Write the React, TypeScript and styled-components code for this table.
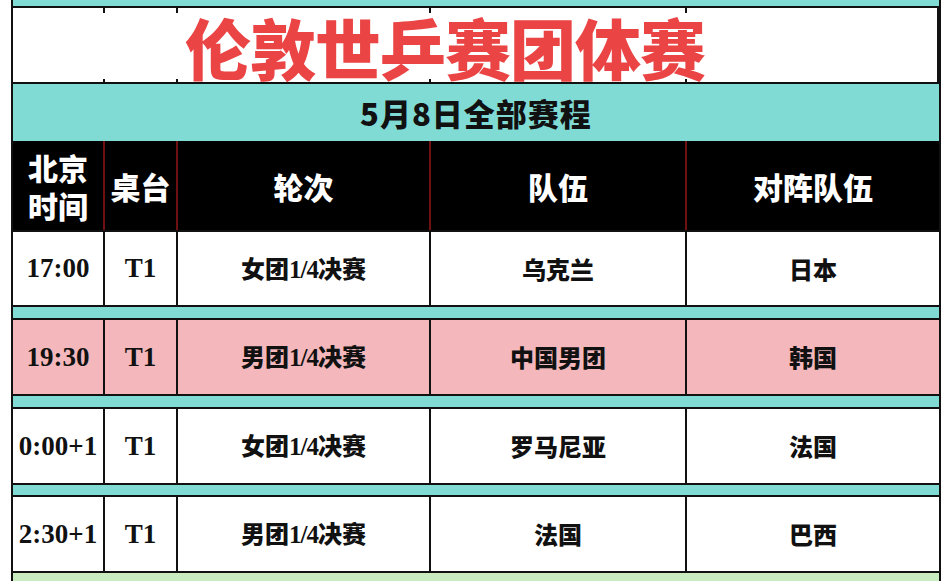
import {FC} from 'react'
import styled, {createGlobalStyle} from 'styled-components'

// 伦敦世乒赛团体赛 schedule board, 5月8日

const TEAL = '#80dbd5'
const PINK = '#f4b8bc'
const COLS = '92px 73px 253px 256px 252px'

const GlobalStyle = createGlobalStyle`
  html, body {
    margin: 0;
    padding: 0;
    background: #fff;
  }
  body {
    font-family: "Noto Sans CJK SC", "Noto Sans", sans-serif;
  }
`

const Page = styled.div`
  width: 945px;
  height: 581px;
  overflow: hidden;
  background: #fff;
`

const Sheet = styled.div`
  margin-left: 11px;
  width: 926px;
  border-left: 2px solid #111;
  border-right: 2px solid #111;
  background: #c8ebc0;
  height: 581px;
`

const TopStrip = styled.div`
  height: 6px;
  background: ${TEAL};
  border-bottom: 2px solid #111;
`

const TitleRow = styled.div`
  position: relative;
  display: grid;
  grid-template-columns: ${COLS};
  height: 74px;
  background: #fff;
  border-bottom: 2px solid #111;
`

const TickCell = styled.div`
  border-right: 2px solid #111;
  &:last-child {
    border-right: none;
  }
`

const TitleCover = styled.div`
  position: absolute;
  inset: 5px 4px 3px 4px;
  background: #fff;
  display: flex;
  align-items: center;
  justify-content: center;
  padding-right: 62px;
`

const Title = styled.h1`
  margin: 0;
  font-family: "Noto Sans CJK SC", sans-serif;
  font-weight: 900;
  font-size: 66px;
  line-height: 66px;
  color: #ea4444;
  letter-spacing: -1px;
`

const DateBand = styled.div`
  height: 57px;
  background: ${TEAL};
  display: flex;
  align-items: center;
  justify-content: center;
  font-family: "Noto Sans CJK SC", sans-serif;
  font-weight: 900;
  font-size: 31px;
  color: #111;
  letter-spacing: 1px;
`

const Row = styled.div<{$tone?: 'white' | 'pink' | 'head'; $height: number}>`
  display: grid;
  grid-template-columns: ${COLS};
  height: ${p => p.$height}px;
  background: ${p =>
    p.$tone === 'pink' ? PINK : p.$tone === 'head' ? '#000' : '#fff'};
  border-bottom: 2px solid #111;
`

const Cell = styled.div<{$head?: boolean; $serif?: boolean}>`
  display: flex;
  align-items: center;
  justify-content: center;
  text-align: center;
  border-right: 2px solid ${p => (p.$head ? '#6e1010' : '#111')};
  color: ${p => (p.$head ? '#fff' : '#111')};
  font-family: ${p =>
    p.$serif
      ? '"Liberation Serif", "Noto Sans CJK SC", serif'
      : '"Noto Sans CJK SC", sans-serif'};
  font-weight: ${p => (p.$serif ? 700 : 900)};
  font-size: ${p => (p.$head ? 30 : p.$serif ? 27 : 24)}px;
  line-height: ${p => (p.$head ? '38px' : '1')};
  white-space: pre-line;
  &:last-child {
    border-right: none;
  }
`

const Round = styled.span`
  font-family: "Noto Sans CJK SC", sans-serif;
  font-size: 24px;
  font-weight: 900;

  span {
    font-family: "Liberation Serif", serif;
    font-weight: 700;
    font-size: 25px;
    letter-spacing: -1px;
  }
`

const Spacer = styled.div<{$height: number}>`
  height: ${p => p.$height}px;
  background: ${TEAL};
  border-bottom: 2px solid #111;
`

type Match = {
  time: string
  table: string
  group: string
  team: string
  rival: string
  pink?: boolean
}

const matches: Match[] = [
  {time: '17:00', table: 'T1', group: '女团', team: '乌克兰', rival: '日本'},
  {time: '19:30', table: 'T1', group: '男团', team: '中国男团', rival: '韩国', pink: true},
  {time: '0:00+1', table: 'T1', group: '女团', team: '罗马尼亚', rival: '法国'},
  {time: '2:30+1', table: 'T1', group: '男团', team: '法国', rival: '巴西'},
]

const spacers = [11, 11, 10]

const App: FC = () => (
  <Page>
    <GlobalStyle />
    <Sheet>
      <TopStrip />
      <TitleRow>
        <TickCell />
        <TickCell />
        <TickCell />
        <TickCell />
        <TickCell />
        <TitleCover>
          <Title>伦敦世乒赛团体赛</Title>
        </TitleCover>
      </TitleRow>
      <DateBand>5月8日全部赛程</DateBand>
      <Row $tone="head" $height={89}>
        <Cell $head>{'北京\n时间'}</Cell>
        <Cell $head>桌台</Cell>
        <Cell $head>轮次</Cell>
        <Cell $head>队伍</Cell>
        <Cell $head>对阵队伍</Cell>
      </Row>
      {matches.map((m, i) => (
        <div key={`match-${m.time}`}>
          <Row $tone={m.pink ? 'pink' : 'white'} $height={i === 0 ? 73 : 74}>
            <Cell $serif>{m.time}</Cell>
            <Cell $serif>{m.table}</Cell>
            <Cell>
              <Round>
                {m.group}
                <span>1/4</span>
                决赛
              </Round>
            </Cell>
            <Cell>{m.team}</Cell>
            <Cell>{m.rival}</Cell>
          </Row>
          {i < spacers.length && <Spacer $height={spacers[i]} />}
        </div>
      ))}
    </Sheet>
  </Page>
)

export default App
